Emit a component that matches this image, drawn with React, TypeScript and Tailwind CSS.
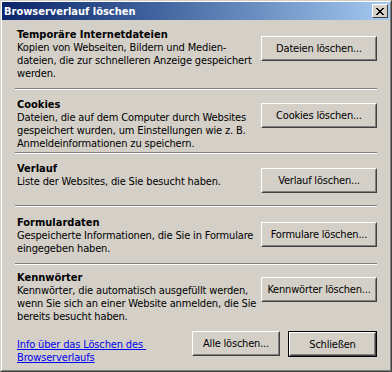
import type { ReactNode } from 'react';

const font = { fontFamily: '"DejaVu Sans Condensed", "DejaVu Sans", sans-serif' };

function XpButton({
  children,
  className = '',
  isDefault = false,
}: {
  children: ReactNode;
  className?: string;
  isDefault?: boolean;
}) {
  const bevel = (
    <span className="flex h-full w-full items-center justify-center border border-t-white border-l-white border-r-[#404040] border-b-[#404040]">
      <span className="flex h-full w-full items-center justify-center border border-t-[#d4d0c8] border-l-[#d4d0c8] border-r-[#808080] border-b-[#808080] text-[11px] leading-[13px] tracking-[-0.2px] whitespace-nowrap text-black">
        {children}
      </span>
    </span>
  );
  return (
    <button
      type="button"
      className={['block shrink-0 bg-[#d4d0c8]', isDefault ? 'border border-black' : '', className].join(' ')}
    >
      {bevel}
    </button>
  );
}

function Separator() {
  return <div className="h-[2px] border-t border-t-[#808080] border-b border-b-white" />;
}

function Section({
  title,
  lines,
  button,
  height,
  textTop,
  buttonTop,
}: {
  title: string;
  lines: string[];
  button: string;
  height: string;
  textTop: string;
  buttonTop: string;
}) {
  return (
    <div className={`flex items-start justify-between ${height}`}>
      <div className={`pl-[2px] text-[11px] leading-[13px] tracking-[-0.15px] text-black whitespace-nowrap ${textTop}`}>
        <div className="font-bold tracking-normal">{title}</div>
        {lines.map((l) => (
          <div key={l}>{l}</div>
        ))}
      </div>
      <XpButton className={`h-[25px] w-[116px] ${buttonTop}`}>{button}</XpButton>
    </div>
  );
}

export default function App() {
  return (
    <div style={font} className="h-[372px] w-[392px] overflow-hidden bg-[#d4d0c8]">
      <div className="flex h-full w-full flex-col border border-t-[#d4d0c8] border-l-[#d4d0c8] border-r-[#404040] border-b-[#404040]">
        <div className="flex h-full w-full flex-col border border-t-white border-l-white border-r-[#808080] border-b-[#808080]">
          {/* title bar */}
          <div className="flex h-[18px] shrink-0 items-center justify-between bg-linear-to-r from-[#0a246a] to-[#a6caf0] pl-[2px] pr-[2px]">
            <span className="text-[11px] font-bold leading-[13px] text-white">Browserverlauf löschen</span>
            <button
              type="button"
              className="flex h-[14px] w-[16px] items-center justify-center border border-t-white border-l-white border-r-[#404040] border-b-[#404040] bg-[#d4d0c8]"
            >
              <svg width="8" height="7" viewBox="0 0 8 7" aria-hidden>
                <path d="M0 0h2v1h1v1h2V1h1V0h2v1H7v1H6v1H5v1h1v1h1v1h1v1H6V6H5V5H3v1H2v1H0V6h1V5h1V4h1V3H2V2H1V1H0z" fill="#000" />
              </svg>
            </button>
          </div>

          <div className="flex flex-1 flex-col px-[13px]">
            <Section
              title="Temporäre Internetdateien"
              lines={[
                'Kopien von Webseiten, Bildern und Medien-',
                'dateien, die zur schnelleren Anzeige gespeichert',
                'werden.',
              ]}
              button="Dateien löschen..."
              height="h-[68px]"
              textTop="pt-[8px]"
              buttonTop="mt-[16px]"
            />
            <Separator />
            <Section
              title="Cookies"
              lines={[
                'Dateien, die auf dem Computer durch Websites',
                'gespeichert wurden, um Einstellungen wie z. B.',
                'Anmeldeinformationen zu speichern.',
              ]}
              button="Cookies löschen..."
              height="h-[62px]"
              textTop="pt-[8px]"
              buttonTop="mt-[13px]"
            />
            <Separator />
            <Section
              title="Verlauf"
              lines={['Liste der Websites, die Sie besucht haben.']}
              button="Verlauf löschen..."
              height="h-[51px]"
              textTop="pt-[8px]"
              buttonTop="mt-[14px]"
            />
            <Separator />
            <Section
              title="Formulardaten"
              lines={['Gespeicherte Informationen, die Sie in Formulare', 'eingegeben haben.']}
              button="Formulare löschen..."
              height="h-[56px]"
              textTop="pt-[9px]"
              buttonTop="mt-[15px]"
            />
            <Separator />
            <Section
              title="Kennwörter"
              lines={[
                'Kennwörter, die automatisch ausgefüllt werden,',
                'wenn Sie sich an einer Website anmelden, die Sie',
                'bereits besucht haben.',
              ]}
              button="Kennwörter löschen..."
              height="h-[66px]"
              textTop="pt-[6px]"
              buttonTop="mt-[12px]"
            />

            <div className="flex items-start justify-between">
              <a
                href="#"
                className="mt-[7px] pl-[2px] text-[11px] leading-[13px] tracking-[-0.15px] text-[#0000ee] underline whitespace-nowrap"
              >
                Info über das Löschen des&nbsp;
                <br />
                Browserverlaufs
              </a>
              <div className="flex gap-[8px]">
                <XpButton className="h-[25px] w-[88px]">Alle löschen...</XpButton>
                <XpButton className="h-[26px] w-[89px]" isDefault>
                  Schließen
                </XpButton>
              </div>
            </div>
          </div>
        </div>
      </div>
    </div>
  );
}
